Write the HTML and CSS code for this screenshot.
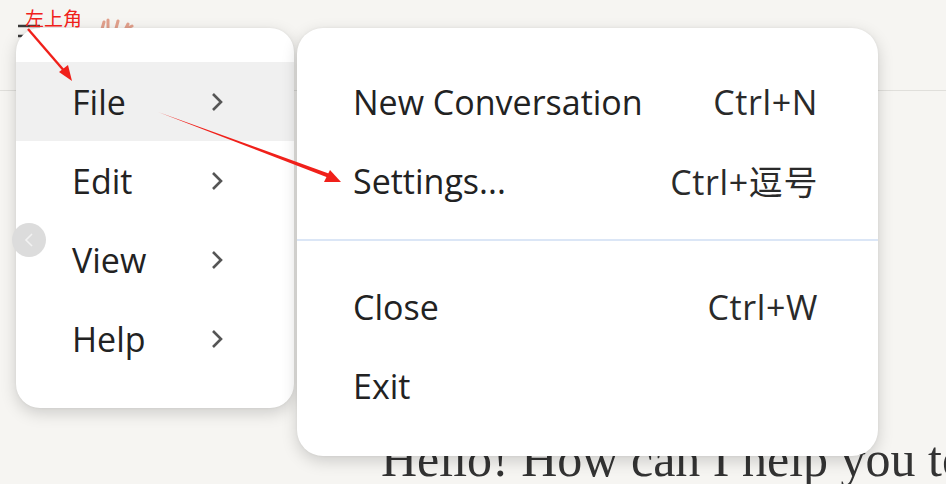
FILE: index.html
```html
<!DOCTYPE html>
<html lang="en">
<head>
  <meta charset="UTF-8">
  <title>Menu</title>
  <link rel="stylesheet" href="styles.css">
</head>
<body>
  <header class="topbar">
    <svg class="menu-icon" width="24" height="16" viewBox="0 0 24 16">
      <path d="M1 2h22M1 12h8" stroke="#3a3a3a" stroke-width="2.4" fill="none"/>
    </svg>
    <svg class="logo" width="40" height="30" viewBox="0 0 40 30">
      <path d="M6 26 L10 12 M14 26 L14 10 M20 26 L24 11 M28 26 L34 14 M30 20 L38 16" stroke="#e2a08c" stroke-width="3" fill="none" stroke-linecap="round"/>
    </svg>
  </header>

  <main class="content">
    <h1 class="greeting">Hello! How can I help you to</h1>
  </main>

  <div class="menu main-menu">
    <div class="menu-item active"><span>File</span><svg class="chev" width="14" height="20" viewBox="0 0 14 20"><path d="M3 2 L11 10 L3 18" stroke="#555" stroke-width="2.6" fill="none"/></svg></div>
    <div class="menu-item"><span>Edit</span><svg class="chev" width="14" height="20" viewBox="0 0 14 20"><path d="M3 2 L11 10 L3 18" stroke="#555" stroke-width="2.6" fill="none"/></svg></div>
    <div class="menu-item"><span>View</span><svg class="chev" width="14" height="20" viewBox="0 0 14 20"><path d="M3 2 L11 10 L3 18" stroke="#555" stroke-width="2.6" fill="none"/></svg></div>
    <div class="menu-item"><span>Help</span><svg class="chev" width="14" height="20" viewBox="0 0 14 20"><path d="M3 2 L11 10 L3 18" stroke="#555" stroke-width="2.6" fill="none"/></svg></div>
  </div>

  <div class="menu sub-menu">
    <div class="sub-item"><span>New Conversation</span><span class="key">Ctrl+N</span></div>
    <div class="sub-item"><span>Settings...</span><span class="key">Ctrl+逗号</span></div>
    <div class="divider"></div>
    <div class="sub-item"><span>Close</span><span class="key">Ctrl+W</span></div>
    <div class="sub-item"><span>Exit</span></div>
  </div>

  <button class="back-btn">
    <svg width="12" height="16" viewBox="0 0 12 16"><path d="M9 2 L3 8 L9 14" stroke="#f2f2f2" stroke-width="1.6" fill="none"/></svg>
  </button>

  <!-- annotation -->
  <div class="note">左上角</div>
  <svg class="arrows" width="946" height="484" viewBox="0 0 946 484">
    <path d="M28 29 L66 73" stroke="#f0201a" stroke-width="2.4" fill="none"/>
    <polygon points="72,81 59,72 68,65" fill="#f0201a"/>
    <polygon points="158,112 330,174 329,178" fill="#f0201a"/>
    <polygon points="341,182 324,182 330,170" fill="#f0201a"/>
  </svg>
</body>
</html>
```

FILE: styles.css
```css
body {
  margin: 0;
  background: #f6f5f2;
  font-family: 'Open Sans', 'Noto Sans CJK SC', sans-serif;
  color: #222;
  height: 484px;
  overflow: hidden;
}
.topbar {
  height: 90px;
  border-bottom: 1px solid #e0dfdb;
  position: relative;
}
.menu-icon {
  position: absolute;
  left: 17px;
  top: 24px;
}
.logo {
  position: absolute;
  left: 94px;
  top: 10px;
}
.content {
  padding-left: 381px;
}
.greeting {
  margin: 343px 0 0;
  font-family: 'Liberation Serif', serif;
  font-weight: normal;
  font-size: 50px;
  line-height: 50px;
  color: #333;
  white-space: nowrap;
}
.back-btn {
  position: absolute;
  left: 12px;
  top: 223px;
  width: 34px;
  height: 34px;
  border: none;
  border-radius: 50%;
  background: #dcdcdc;
  display: flex;
  align-items: center;
  justify-content: center;
  padding: 0;
}
.menu {
  position: absolute;
  top: 28px;
  background: #fff;
  box-shadow: 0 5px 16px rgba(0, 0, 0, 0.17), 0 0 3px rgba(0, 0, 0, 0.06);
  font-size: 34px;
}
.main-menu {
  left: 16px;
  width: 278px;
  height: 380px;
  border-radius: 24px;
  padding-top: 34px;
  box-sizing: border-box;
}
.menu-item {
  height: 79px;
  display: flex;
  align-items: center;
  justify-content: space-between;
  padding: 0 70px 0 56px;
}
.menu-item.active {
  background: #f0f0f0;
}
.sub-menu {
  left: 297px;
  width: 581px;
  height: 428px;
  border-radius: 26px;
  padding-top: 34px;
  box-sizing: border-box;
}
.sub-item {
  height: 79px;
  display: flex;
  align-items: center;
  justify-content: space-between;
  padding: 0 60px 0 56px;
}
.key {
  color: #2a2a2a;
  letter-spacing: 0.6px;
}
.divider {
  height: 2px;
  background: #dbe6f6;
  margin: 19px 0 26px;
}
.note {
  position: absolute;
  left: 25px;
  top: 6px;
  font-family: 'Noto Sans CJK SC', sans-serif;
  font-size: 19px;
  line-height: 24px;
  color: #f0201a;
}
.arrows {
  position: absolute;
  left: 0;
  top: 0;
  pointer-events: none;
}
```
